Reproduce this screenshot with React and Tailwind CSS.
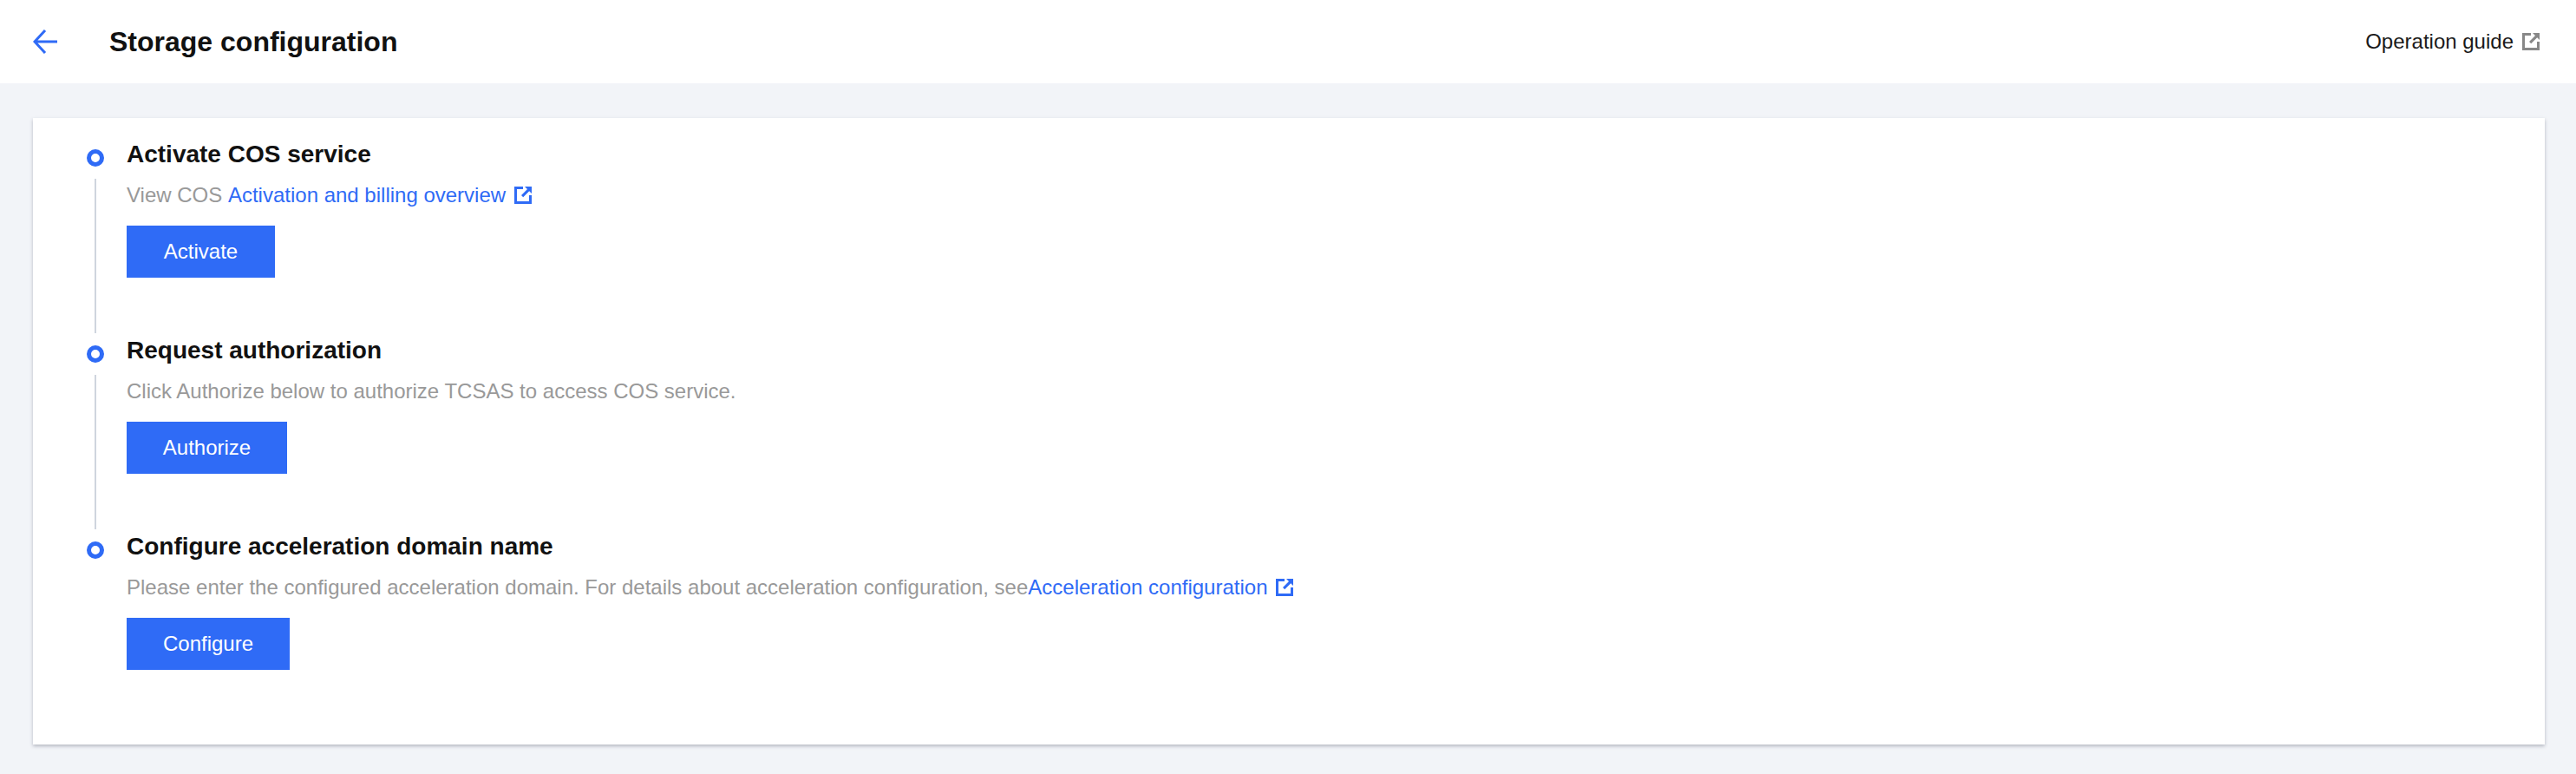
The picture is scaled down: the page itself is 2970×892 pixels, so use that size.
import { useState } from 'react';

const steps = [
  { title: 'Activate COS service', action: 'Activate', width: 'w-[171px]', kind: 'cos' },
  { title: 'Request authorization', action: 'Authorize', width: 'w-[185px]', kind: 'auth' },
  { title: 'Configure acceleration domain name', action: 'Configure', width: 'w-[188px]', kind: 'domain', last: true },
];

function ExternalIcon({ className }) {
  return (
    <svg viewBox="0 0 20 20" className={className} fill="currentColor">
      <path fillRule="evenodd" d="M0 0h10v3H3v14h14v-7h3v10H0z M12 0h8v8l-2.8-2.8-7 7-2.2-2.2 7-7z" />
    </svg>
  );
}

function DocLink({ children }) {
  return (
    <a href="#" className="inline-flex items-center text-[#2f6bf6]">
      {children}
      <ExternalIcon className="ml-[10px] h-5 w-5" />
    </a>
  );
}

function Description({ kind }) {
  if (kind === 'cos') {
    return (
      <p className="text-[24px] leading-[36px] text-[#999999]">
        View COS <DocLink>Activation and billing overview</DocLink>
      </p>
    );
  }
  if (kind === 'auth') {
    return (
      <p className="text-[24px] leading-[36px] text-[#999999]">
        Click Authorize below to authorize TCSAS to access COS service.
      </p>
    );
  }
  return (
    <p className="text-[24px] leading-[36px] text-[#999999]">
      Please enter the configured acceleration domain. For details about acceleration configuration, see
      <DocLink>Acceleration configuration</DocLink>
    </p>
  );
}

function Step({ step }) {
  return (
    <div className="flex h-[226px] gap-[26px]">
      <div className="flex w-5 flex-col items-center pt-[14px]">
        <span className="h-5 w-5 shrink-0 rounded-full border-[5px] border-[#2f6bf6] bg-white" />
        {!step.last && <span className="mt-[14px] w-[2px] flex-1 bg-[#cfd5de]" />}
      </div>
      <div>
        <h2 className="text-[28px] font-bold leading-[40px] text-[#111111]">{step.title}</h2>
        <div className="mt-[9px]">
          <Description kind={step.kind} />
        </div>
        <button className={`mt-[17px] block h-[60px] ${step.width} bg-[#2f6bf6] text-center text-[24px] text-white`}>
          {step.action}
        </button>
      </div>
    </div>
  );
}

export default function App() {
  const [open] = useState(true);
  return (
    <div className="h-[892px] bg-[#f2f4f8] font-['Liberation_Sans',Arial,sans-serif]">
      <header className="flex h-24 items-center bg-white pl-[38px] pr-[42px]">
        <svg viewBox="0 0 28 28" className="h-7 w-7 text-[#2f6bf6]" fill="none" stroke="currentColor" strokeWidth="3">
          <path d="M14 1 2 14l12 13M2 14h26" />
        </svg>
        <h1 className="ml-[60px] text-[32px] font-bold text-[#111111]">Storage configuration</h1>
        <a href="#" className="ml-auto flex items-center text-[24px] text-[#1a1a1a]">
          Operation guide
          <ExternalIcon className="ml-[10px] h-5 w-5 text-[#888888]" />
        </a>
      </header>
      {open && (
        <main className="px-[36px] pt-10">
          <div className="ml-[2px] h-[722px] w-[2896px] bg-white pl-[62px] pt-[22px] shadow-[0_2px_4px_rgba(54,58,80,0.32)]">
            {steps.map((step) => (
              <Step key={step.title} step={step} />
            ))}
          </div>
        </main>
      )}
    </div>
  );
}
